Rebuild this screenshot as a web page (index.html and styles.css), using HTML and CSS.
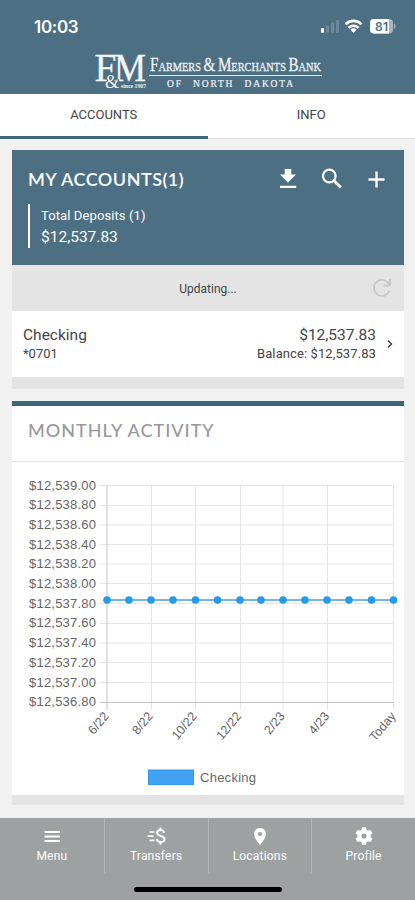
FILE: index.html
```html
<!DOCTYPE html>
<html lang="en">

<head>
    <meta charset="utf-8">
    <title>Accounts</title>
    <link rel="stylesheet" href="styles.css">
</head>

<body>
    <header class="header">
        <div class="status">
            <span class="time">10:03</span>
            <svg class="status-icons" width="78" height="18" viewBox="0 0 78 18">
                <rect x="2" y="11" width="3" height="5" rx="1" fill="#fff" />
                <g fill="#6c8799">
                    <rect x="7" y="8.500" width="3" height="7.500" rx="1" />
                    <rect x="12" y="5.500" width="3" height="10.500" rx="1" />
                    <rect x="17" y="3" width="3" height="13" rx="1" />
                </g>
                <g fill="none" stroke="#fff" stroke-width="2.600">
                    <path d="M26.500 7.300a11 11 0 0 1 16 0" />
                    <path d="M29.500 10.800a7 7 0 0 1 10 0" />
                </g>
                <path d="M34.500 16l-3-3.200a4.300 4.300 0 0 1 6 0z" fill="#fff" />
                <path d="M75 6.500c2 .8 2 4.600 0 5.400z" fill="#a6b7c1" />
                <rect x="51" y="2" width="23" height="14.500" rx="4" fill="#a6b7c1" />
                <path d="M55 2h15v14.500H55a4 4 0 0 1-4-4V6a4 4 0 0 1 4-4z" fill="#fff" />
                <text class="battery" x="56" y="13.500" textLength="13">81</text>
            </svg>
        </div>
        <svg class="logo" width="232" height="42" viewBox="92 50 232 42">
            <text class="mono" x="94.500" y="81" textLength="22" lengthAdjust="spacingAndGlyphs">F</text>
            <text class="mono" x="114" y="81" textLength="32" lengthAdjust="spacingAndGlyphs">M</text>
            <text class="amp" x="105" y="88" textLength="14" lengthAdjust="spacingAndGlyphs">&amp;</text>
            <text class="since" x="121" y="88" textLength="25" lengthAdjust="spacingAndGlyphs">since 1907</text>
            <text class="name" x="150" y="70.500" textLength="171" lengthAdjust="spacingAndGlyphs"><tspan class="cap">F</tspan>ARMERS <tspan class="cap">&amp;</tspan> <tspan class="cap">M</tspan>ERCHANTS <tspan class="cap">B</tspan>ANK</text>
            <rect x="149" y="75" width="173" height="1" fill="#e4ebef" />
            <text class="state" x="167" y="87" textLength="126">OF NORTH DAKOTA</text>
        </svg>
    </header>

    <nav class="tabs">
        <a class="tab active">ACCOUNTS</a>
        <a class="tab">INFO</a>
    </nav>

    <main class="content">
        <section class="card accounts">
            <div class="summary">
                <div class="summary-head">
                    <h1>MY ACCOUNTS(1)</h1>
                    <div class="actions">
                        <svg width="24" height="24" viewBox="0 0 24 24" fill="#fff">
                            <path d="M8.700 2h6.600v5.500h4.700l-8 8-8-8h4.700zM4 18.700h16.200v2.400H4z" />
                        </svg>
                        <svg width="24" height="24" viewBox="0 0 24 24" fill="none" stroke="#fff">
                            <circle cx="9.300" cy="9" r="6.300" stroke-width="2.200" />
                            <path d="M13.800 13.500l7 7" stroke-width="2.900" />
                        </svg>
                        <svg width="24" height="24" viewBox="0 0 24 24" stroke="#fff" stroke-width="2.300">
                            <path d="M12.500 4.500v16M4.500 12.500h16" />
                        </svg>
                    </div>
                </div>
                <div class="totals">
                    <div class="totals-label">Total Deposits (1)</div>
                    <div class="totals-value">$12,537.83</div>
                </div>
            </div>
            <div class="updating">
                <span>Updating...</span>
                <svg width="20" height="20" viewBox="0 0 20 20" fill="none" stroke="#c9c9c9" stroke-width="1.900">
                    <path d="M17.500 12.500A8 8 0 1 1 15.700 4.300L18 6.800" />
                    <path d="M18 1v6.500h-6.500" />
                </svg>
            </div>
            <div class="account">
                <div>
                    <div class="account-name">Checking</div>
                    <div class="account-sub">*0701</div>
                </div>
                <div class="amounts">
                    <div class="account-name amount">$12,537.83</div>
                    <div class="account-sub balance">Balance: $12,537.83</div>
                </div>
                <svg class="chevron" width="6" height="10" viewBox="0 0 6 10" fill="none" stroke="#444" stroke-width="1.500">
                    <path d="M1 1.500l3.500 3.500-3.500 3.500" />
                </svg>
            </div>
        </section>

        <section class="card activity">
            <h2>MONTHLY ACTIVITY</h2>
            <svg class="chart" width="392" height="333" viewBox="12 462 392 333">
                <path class="grid" d="M100 485.500h294M100 505.500h294M100 525h294M100 544.500h294M100 564h294M100 583.500h294M100 603.500h294M100 623.500h294M100 643h294M100 662.500h294M100 682.500h294" />
                <path class="grid" d="M151.500 485v225M195.500 485v225M240.500 485v225M283 485v225M327.500 485v225M393.500 485v225" />
                <path class="axis" d="M107 485v225M100 702.500h294" />
                <g class="y-labels">
                    <text x="29" y="489.500" textLength="67">$12,539.00</text>
                    <text x="29" y="509.200" textLength="67">$12,538.80</text>
                    <text x="29" y="528.900" textLength="67">$12,538.60</text>
                    <text x="29" y="548.600" textLength="67">$12,538.40</text>
                    <text x="29" y="568.300" textLength="67">$12,538.20</text>
                    <text x="29" y="588" textLength="67">$12,538.00</text>
                    <text x="29" y="607.700" textLength="67">$12,537.80</text>
                    <text x="29" y="627.400" textLength="67">$12,537.60</text>
                    <text x="29" y="647.100" textLength="67">$12,537.40</text>
                    <text x="29" y="666.800" textLength="67">$12,537.20</text>
                    <text x="29" y="686.500" textLength="67">$12,537.00</text>
                    <text x="29" y="706.200" textLength="67">$12,536.80</text>
                </g>
                <g class="x-labels">
                    <text transform="translate(109.500 716.500) rotate(-50)">6/22</text>
                    <text transform="translate(153.500 716.500) rotate(-50)">8/22</text>
                    <text transform="translate(197.500 716.500) rotate(-50)">10/22</text>
                    <text transform="translate(242 716.500) rotate(-50)">12/22</text>
                    <text transform="translate(285.500 716.500) rotate(-50)">2/23</text>
                    <text transform="translate(330 716.500) rotate(-50)">4/23</text>
                    <text transform="translate(396.500 716.500) rotate(-50)">Today</text>
                </g>
                <path class="series" d="M107 600h286.500" />
                <g class="points">
                    <circle cx="107" cy="600" r="3.800" />
                    <circle cx="129" cy="600" r="3.800" />
                    <circle cx="151" cy="600" r="3.800" />
                    <circle cx="173" cy="600" r="3.800" />
                    <circle cx="195.500" cy="600" r="3.800" />
                    <circle cx="217.500" cy="600" r="3.800" />
                    <circle cx="240" cy="600" r="3.800" />
                    <circle cx="261" cy="600" r="3.800" />
                    <circle cx="283" cy="600" r="3.800" />
                    <circle cx="305" cy="600" r="3.800" />
                    <circle cx="327" cy="600" r="3.800" />
                    <circle cx="349" cy="600" r="3.800" />
                    <circle cx="371.500" cy="600" r="3.800" />
                    <circle cx="393.500" cy="600" r="3.800" />
                </g>
                <rect class="legend" x="148.500" y="770" width="45" height="14.500" />
                <text class="legend-text" x="200" y="782" textLength="56">Checking</text>
            </svg>
        </section>
    </main>

    <footer class="bottom">
        <div class="bottom-nav">
            <a class="item">
                <svg width="20" height="20" viewBox="0 0 20 20" stroke="#fff" stroke-width="2">
                    <path d="M2.500 6h15.500M2.500 10.500h15.500M2.500 15h15.500" />
                </svg>
                <span>Menu</span>
            </a>
            <a class="item">
                <svg width="20" height="20" viewBox="0 0 20 20" fill="none" stroke="#fff" stroke-width="2">
                    <path d="M3.500 6h5M1.500 10.200h6M3.500 14.400h5" stroke-width="1.700" />
                    <path d="M18 7c-.2-2-1.500-3-3.500-3S11 5 11 6.800c0 4 7.500 2.500 7.500 6.200 0 2-1.600 3-3.800 3s-3.700-1.100-3.900-3.200M14.500 1.500V4M14.500 16v2.700" />
                </svg>
                <span>Transfers</span>
            </a>
            <a class="item">
                <svg width="20" height="20" viewBox="0 0 20 20" fill="#fff" fill-rule="evenodd">
                    <path d="M10 2C6.600 2 4 4.600 4 7.900 4 12.300 10 19 10 19s6-6.700 6-11.100C16 4.600 13.400 2 10 2zm0 3.900a2.100 2.100 0 1 1 0 4.200 2.100 2.100 0 0 1 0-4.200z" />
                </svg>
                <span>Locations</span>
            </a>
            <a class="item">
                <svg width="20" height="20" viewBox="1 1 22 22" fill="#fff">
                    <path d="M19.140 12.940c.04-.3.060-.61.060-.94s-.020-.64-.070-.94l2.030-1.580a.49.49 0 0 0 .12-.61l-1.920-3.320a.49.49 0 0 0-.59-.22l-2.390.96a7 7 0 0 0-1.620-.94l-.36-2.540a.48.48 0 0 0-.48-.41h-3.840a.47.47 0 0 0-.47.410l-.36 2.540a7 7 0 0 0-1.620.94l-2.390-.96a.48.48 0 0 0-.59.220L2.740 8.870a.48.48 0 0 0 .12.610l2.030 1.580a6 6 0 0 0 0 1.880l-2.030 1.580a.49.49 0 0 0-.12.610l1.920 3.320c.12.220.37.290.59.220l2.390-.96c.5.380 1.030.7 1.620.94l.36 2.540c.05.240.24.410.48.410h3.840c.24 0 .44-.17.470-.41l.36-2.540a7 7 0 0 0 1.620-.94l2.390.96c.22.080.47 0 .59-.22l1.920-3.320a.47.47 0 0 0-.12-.61z" />
                    <circle cx="12" cy="12" r="2.800" fill="#9da1a1" />
                </svg>
                <span>Profile</span>
            </a>
        </div>
        <div class="home-bar"></div>
    </footer>
</body>

</html>
```
FILE: styles.css
```css
* {
    box-sizing: border-box;
}

body {
    margin: 0;
    height: 900px;
    display: flex;
    flex-direction: column;
    overflow: hidden;
    background-color: #f1f1f1;
    font-family: Roboto, Arial, sans-serif;
    color: #444;
}

svg {
    display: block;
    overflow: visible;
}

.header {
    height: 94px;
    background-color: #4d6f84;
    display: flex;
    flex-direction: column;
    align-items: center;
}

.status {
    width: 100%;
    height: 50px;
    padding: 17px 18px 0 34px;
    display: flex;
    justify-content: space-between;
}

.time {
    font-family: Inter, sans-serif;
    font-size: 17px;
    font-weight: 600;
    line-height: 21px;
    letter-spacing: -0.3px;
    color: #fff;
}

.battery {
    font-family: Inter, sans-serif;
    font-size: 12px;
    font-weight: 600;
    fill: #4d6f84;
}

.logo text {
    font-family: "Liberation Serif", serif;
    fill: #f1f5f7;
}

.logo .mono {
    font-size: 39px;
    stroke: #f1f5f7;
    stroke-width: 0.3px;
}

.logo .amp {
    font-size: 19px;
    stroke: #4d6f84;
    stroke-width: 2px;
    paint-order: stroke;
}

.since {
    font-size: 7px;
    font-weight: bold;
}

.name {
    font-size: 13px;
    stroke: #f1f5f7;
    stroke-width: 0.3px;
}

.cap {
    font-size: 19px;
}

.state {
    font-size: 9.5px;
    word-spacing: 6px;
    stroke: #f1f5f7;
    stroke-width: 0.2px;
}

.tabs {
    height: 45px;
    display: flex;
    background-color: #fff;
}

.tab {
    flex: 1;
    padding-top: 12px;
    border-bottom: 1px solid #e2e2e2;
    font-size: 13px;
    line-height: 18px;
    text-align: center;
}

.tab.active {
    border-bottom: 3px solid #396779;
}

.content {
    flex: 1;
    padding: 11px 11px 0 12px;
    display: flex;
    flex-direction: column;
    gap: 12px;
}

.card {
    background-color: #fff;
}

.accounts {
    height: 239px;
    border-bottom: 12px solid #e4e4e4;
}

.summary {
    height: 115px;
    padding: 17px 16px 0;
    background-color: #4d6f84;
    color: #fff;
}

.summary-head {
    height: 24px;
    display: flex;
    align-items: center;
    justify-content: space-between;
}

h1 {
    margin: 0;
    font-family: Lato, sans-serif;
    font-size: 18px;
    font-weight: 600;
    letter-spacing: 0.5px;
}

.actions {
    display: flex;
    gap: 20px;
}

.totals {
    width: 180px;
    height: 44px;
    margin-top: 13px;
    padding-left: 11px;
    border-left: 2px solid #fff;
}

.totals-label {
    font-size: 13px;
    line-height: 23px;
    letter-spacing: 0.1px;
}

.totals-value {
    font-size: 15.5px;
    line-height: 20px;
}

.updating {
    height: 46px;
    padding: 0 12px;
    display: grid;
    grid-template-columns: 1fr 20px;
    align-items: center;
    background-color: #e4e4e4;
    font-size: 12px;
    text-align: center;
}

.updating span {
    padding: 2px 0 0 20px;
}

.account {
    height: 66px;
    padding: 0 11px;
    display: flex;
    align-items: center;
}

.account-name {
    font-size: 15.5px;
    line-height: 19px;
}

.account-sub {
    font-size: 13px;
    line-height: 18px;
}

.balance {
    letter-spacing: 0.1px;
}

.amounts {
    margin-left: auto;
    margin-right: 11px;
    text-align: right;
}

.activity {
    height: 404px;
    border-top: 5px solid #396779;
    border-bottom: 10px solid #e4e4e4;
}

h2 {
    height: 56px;
    margin: 0;
    padding-left: 16px;
    border-bottom: 1px solid #e2e2e2;
    font-family: Lato, sans-serif;
    font-size: 18px;
    font-weight: 500;
    line-height: 48px;
    letter-spacing: 1px;
    color: #999;
}

.grid {
    stroke: #e6e6e6;
}

.axis {
    stroke: #c4c4c4;
}

.chart text {
    font-family: "Liberation Sans", Arial, sans-serif;
    font-size: 13px;
    fill: #666;
}

.chart .x-labels text {
    font-size: 12.5px;
    text-anchor: end;
}

.series {
    stroke: #73b5f1;
    stroke-width: 2px;
}

.points {
    fill: #249aec;
}

.legend {
    fill: #42a1f3;
    stroke: #2c98ee;
}

.bottom {
    height: 82px;
    background-color: #9da1a1;
    color: #fff;
}

.bottom-nav {
    height: 55px;
    display: grid;
    grid-template-columns: repeat(4, 1fr);
}

.item {
    padding-top: 8px;
    display: flex;
    flex-direction: column;
    align-items: center;
    font-size: 12px;
    line-height: 20px;
    letter-spacing: 0.2px;
}

.item + .item {
    border-left: 1px solid #b0b3b3;
}

.home-bar {
    width: 148px;
    height: 5px;
    margin: 14px auto 0;
    border-radius: 3px;
    background-color: #000;
}
```
